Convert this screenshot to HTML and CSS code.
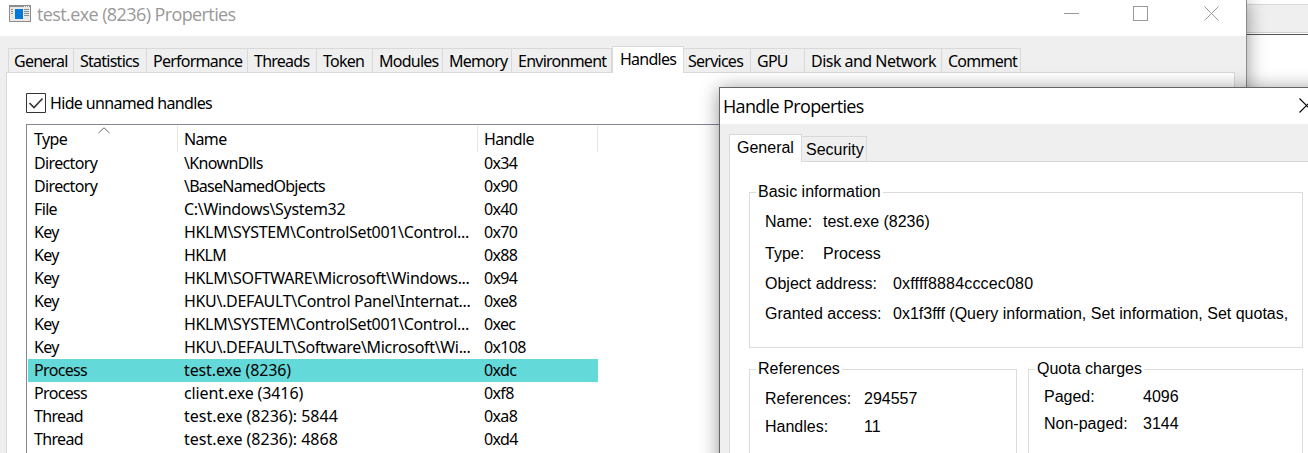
FILE: index.html
```html
<!DOCTYPE html>
<html lang="en">
<head>
<meta charset="utf-8">
<title>test.exe (8236) Properties</title>
<link rel="stylesheet" href="styles.css">
</head>
<body>
<div class="desktop">
  <div class="backdrop"><div class="backdrop-bar"></div></div>

  <section class="window main">
    <header class="titlebar">
      <svg class="app-icon" width="22" height="17" viewBox="0 0 22 17" shape-rendering="crispEdges">
        <rect width="22" height="17" fill="#8d8d8d"/><rect x="1" y="2" width="20" height="14" fill="#e9e9e9"/>
        <path d="M15 1h1v1h-1zM17 1h1v1h-1zM19 1h1v1h-1z" fill="#fff"/>
        <rect x="6" y="4" width="8" height="10" fill="#0078d7"/>
        <path d="M2 4h2v1H2zM2 6h2v1H2zM2 8h2v1H2zM15 4h5v1h-5zM15 6h5v1h-5zM15 8h5v1h-5zM15 10h5v1h-5z" fill="#8d8d8d"/>
      </svg>
      <h1 class="title">test.exe (8236) Properties</h1>
      <svg class="controls" width="156" height="17" viewBox="0 0 156 17" fill="none" stroke="#999">
        <path d="M0 7.500h15M69.500.500h14v14h-14z" shape-rendering="crispEdges"/><path d="M140.500.500l14 14M154.500.500l-14 14"/>
      </svg>
    </header>
    <nav class="tabs">
      <span class="tab t-general">General</span><span class="tab t-statistics">Statistics</span><span class="tab t-performance">Performance</span><span class="tab t-threads">Threads</span><span class="tab t-token">Token</span><span class="tab t-modules">Modules</span><span class="tab t-memory">Memory</span><span class="tab t-environment">Environment</span><span class="tab t-handles active">Handles</span><span class="tab t-services">Services</span><span class="tab t-gpu">GPU</span><span class="tab t-disk">Disk and Network</span><span class="tab t-comment">Comment</span>
    </nav>
    <div class="page">
      <label class="check">
        <svg width="20" height="20" viewBox="0 0 20 20" fill="none" stroke="#333"><path d="M.500.500h19v19H.500z"/><path d="M3.500 10l4.500 4.500 8.500-9" stroke-width="1.600"/></svg>
        <span>Hide unnamed handles</span>
      </label>
      <div class="list">
        <div class="row head"><span>Type<svg class="sort" width="12" height="7" viewBox="0 0 12 7" fill="none" stroke="#666"><path d="M.500 6L6 .800 11.500 6"/></svg></span><span>Name</span><span>Handle</span></div>
        <div class="row"><span>Directory</span><span>\KnownDlls</span><span>0x34</span></div>
        <div class="row"><span>Directory</span><span class="object">\BaseNamedObjects</span><span>0x90</span></div>
        <div class="row"><span>File</span><span class="path">C:\Windows\System32</span><span>0x40</span></div>
        <div class="row"><span>Key</span><span class="path">HKLM\SYSTEM\ControlSet001\Control...</span><span>0x70</span></div>
        <div class="row"><span>Key</span><span>HKLM</span><span>0x88</span></div>
        <div class="row"><span>Key</span><span class="path">HKLM\SOFTWARE\Microsoft\Windows...</span><span>0x94</span></div>
        <div class="row"><span>Key</span><span class="path">HKU\.DEFAULT\Control Panel\Internat...</span><span>0xe8</span></div>
        <div class="row"><span>Key</span><span class="path">HKLM\SYSTEM\ControlSet001\Control...</span><span>0xec</span></div>
        <div class="row"><span>Key</span><span class="path">HKU\.DEFAULT\Software\Microsoft\Wi...</span><span>0x108</span></div>
        <div class="row selected"><span>Process</span><span class="proc">test.exe (8236)</span><span>0xdc</span></div>
        <div class="row"><span>Process</span><span class="proc">client.exe (3416)</span><span>0xf8</span></div>
        <div class="row"><span>Thread</span><span class="thread">test.exe (8236): 5844</span><span>0xa8</span></div>
        <div class="row"><span>Thread</span><span class="thread">test.exe (8236): 4868</span><span>0xd4</span></div>
      </div>
    </div>
  </section>

  <section class="window dialog">
    <header class="dialog-title"><h2 class="title">Handle Properties</h2>
      <svg width="15" height="15" viewBox="0 0 15 15" fill="none" stroke="#000" stroke-width="1.100"><path d="M.500.500l14 14M14.500.500l-14 14"/></svg>
    </header>
    <nav class="dialog-tabs"><span class="dtab current">General</span><span class="dtab">Security</span></nav>
    <div class="dialog-page">
      <fieldset class="basic"><legend>Basic information</legend>
        <dl>
          <div class="r-name"><dt>Name:</dt><dd>test.exe (8236)</dd></div>
          <div class="r-type"><dt>Type:</dt><dd>Process</dd></div>
          <div class="r-wide"><dt>Object address:</dt><dd class="address">0xffff8884cccec080</dd></div>
          <div class="r-wide"><dt>Granted access:</dt><dd>0x1f3fff (Query information, Set information, Set quotas,</dd></div>
        </dl>
      </fieldset>
      <div class="groups">
        <fieldset class="refs"><legend>References</legend>
          <dl><div><dt>References:</dt><dd>294557</dd></div><div><dt>Handles:</dt><dd>11</dd></div></dl>
        </fieldset>
        <fieldset class="quota"><legend>Quota charges</legend>
          <dl><div><dt>Paged:</dt><dd>4096</dd></div><div><dt>Non-paged:</dt><dd>3144</dd></div></dl>
        </fieldset>
      </div>
    </div>
  </section>
</div>
</body>
</html>
```
FILE: styles.css
```css
* { box-sizing: border-box; }
body { margin: 0; background: #fff; color: #000; }
h1, h2, dl, dd, fieldset { margin: 0; padding: 0; }
.desktop { position: relative; width: 1308px; height: 453px; overflow: hidden; white-space: nowrap; }
.backdrop { position: absolute; left: 1200px; top: 0; width: 108px; height: 453px; padding-top: 4px; }
.backdrop-bar { height: 31px; background: #efefef; border-top: 1px solid #d9d9d9; border-bottom: 1px solid #555; box-shadow: inset 0 -1px #fff, inset 0 -2px #d0d0d0; }
.window { position: absolute; }
.title { font: 400 18px/24px "Open Sans", sans-serif; }

.main { left: -1px; top: -1px; width: 1248px; height: 500px; background: #efefef; border: 1px solid #8a8a8a; border-top-color: #fff; box-shadow: 0 2px 18px rgba(0,0,0,.42); font: 16px/23px "Noto Sans", sans-serif; }
.titlebar { display: flex; height: 36px; padding: 5px 26px 0 9px; background: #fff; color: #999; }
.titlebar .title { margin: -3px 0 0 6px; letter-spacing: -.6px; }
.controls { margin: 1px 0 0 auto; }
.tabs { display: flex; height: 37px; padding: 12px 0 0 8px; align-items: flex-start; }
.tab { height: 25px; padding: 1px 0 0 6px; border: 1px solid #d9d9d9; border-left-width: 0; letter-spacing: -.75px; }
.t-general { width: 66px; border-left-width: 1px; padding-left: 5px; }
.t-statistics { width: 73px; }
.t-performance { width: 101px; }
.t-threads { width: 69px; }
.t-token { width: 56px; }
.t-modules { width: 70px; }
.t-memory { width: 69px; }
.t-environment { width: 100px; }
.t-handles { width: 72px; }
.t-services { width: 67px; padding-left: 4px; }
.t-gpu { width: 54px; }
.t-disk { width: 137px; letter-spacing: -.53px; }
.t-comment { width: 79px; }
.tab.active { height: 27px; margin-top: -2px; padding: 1px 0 0 7px; background: #fff; border-width: 1px 1px 0; z-index: 1; }
.page { width: 1229px; height: 430px; margin: -1px 0 0 6px; padding: 20px 0 0 19px; background: #fff; border: 1px solid #d9d9d9; }
.check { display: flex; gap: 4px; height: 31px; letter-spacing: -.65px; }
.check span { margin-top: -1px; }
.list { width: 1190px; height: 370px; border: 1px solid #828790; padding: 1px 0 0 1px; letter-spacing: -.65px; }
.row { display: grid; grid-template-columns: 150px 300px 120px; width: 570px; height: 23px; line-height: 23px; }
.row span { padding-left: 6px; }
.row .object { letter-spacing: -.75px; }
.row .path { letter-spacing: -.32px; }
.row .proc { letter-spacing: -.12px; }
.row .thread { letter-spacing: 0; }
.head { height: 26px; padding-bottom: 1px; line-height: 26px; }
.head span { position: relative; border-right: 1px solid #e5e5e5; }
.sort { position: absolute; left: 70px; top: 1px; }
.selected { background: #64d9d9; }

.dialog { left: 719px; top: 87px; width: 610px; height: 400px; background: #efefef; border: 1px solid #666; box-shadow: 0 2px 18px rgba(0,0,0,.42); font: 16px/20px "Liberation Sans", sans-serif; }
.dialog-title { display: flex; height: 36px; padding: 6px 0 0 3px; background: #fff; }
.dialog-title .title { width: 576px; letter-spacing: -.65px; }
.dialog-title svg { margin-top: 4px; }
.dialog-tabs { display: flex; height: 38px; padding: 10px 0 0 9px; align-items: flex-start; }
.dtab { width: 65px; height: 26px; margin-top: 2px; padding: 3px 0 0 4px; border: 1px solid #d9d9d9; border-left: 0; }
.dtab.current { width: 73px; height: 28px; margin-top: 0; padding-left: 7px; border-left: 1px solid #d9d9d9; border-bottom: 0; background: #fff; z-index: 1; }
.dialog-page { width: 610px; height: 300px; margin: -1px 0 0 9px; padding: 20px 0 0 19px; border: 1px solid #d9d9d9; background: #fff; }
fieldset { border: 1px solid #dcdcdc; min-width: 0; }
legend { height: 20px; margin-left: -9px; padding: 0 2px; }
dl > div { display: flex; }
.basic { width: 554px; height: 166px; padding-left: 15px; }
.basic dl { padding-top: 10px; }
.basic dl > div { height: 30px; }
.basic .r-name { height: 32px; }
.r-name dt, .r-type dt { width: 58px; }
.r-wide dt { width: 128px; }
.address { letter-spacing: .18px; }
.groups { display: flex; gap: 11px; margin-top: 11px; }
.refs { width: 268px; height: 180px; padding-left: 15px; }
.refs dl { padding-top: 10px; }
.refs dl > div { height: 28px; }
.refs dt { width: 99px; }
.quota { width: 275px; height: 180px; padding-left: 15px; }
.quota dl { padding-top: 8px; }
.quota dl > div { height: 27px; }
.quota dt { width: 99px; }
```
